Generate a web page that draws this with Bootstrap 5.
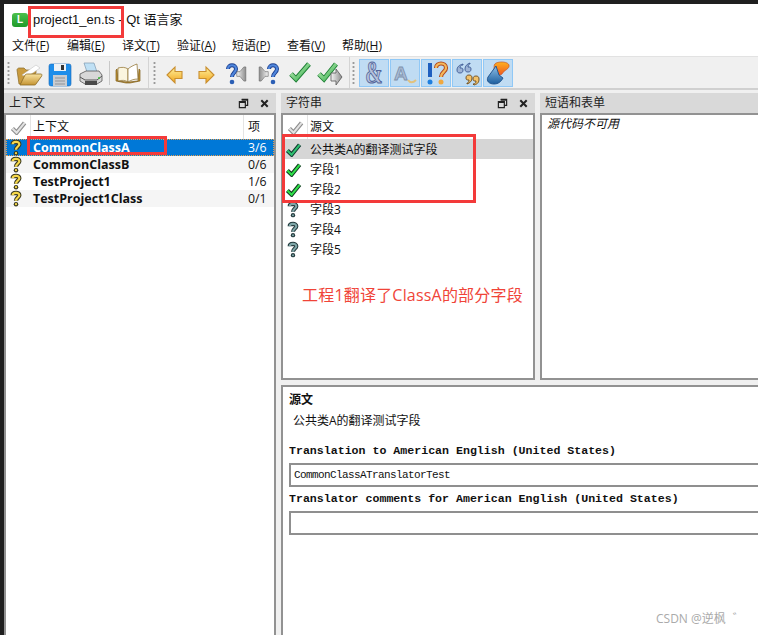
<!DOCTYPE html>
<html lang="zh">
<head>
<meta charset="utf-8">
<title>Qt 语言家</title>
<link rel="stylesheet" href="https://cdn.jsdelivr.net/npm/bootstrap@5.3.0/dist/css/bootstrap.min.css">
<style>
html,body{height:635px;overflow:hidden;background:#1f1f1f;}
body{font-family:"Open Sans","Noto Sans CJK SC",sans-serif;font-size:12px;color:#111;position:relative;}
.shell{width:754px;height:640px;margin:4px 0 0 4px;background:#f0f0f0;display:flex;flex-direction:column;}
.titlebar{height:31px;background:#fff;padding-left:8px;flex:none;}
.appicon{width:16px;height:14px;background:linear-gradient(#4cc04c,#1f9a2a);border-radius:3px;color:#fff;font:bold 10px/14px "Liberation Sans",sans-serif;text-align:center;margin-right:5px;}
.apptitle{font-family:"Liberation Sans","Noto Sans CJK SC",sans-serif;font-size:13px;line-height:20px;color:#111;}
.menubar{height:21px;background:#fff;padding-left:8px;flex:none;}
.menuitem{width:55px;font-size:12px;line-height:20px;white-space:nowrap;color:#111;}
.toolbar{height:34px;flex:none;background:#f0f0f0;border-top:1px solid #e2e2e2;border-bottom:2px solid #d0d0d0;}
.tgroup{height:100%;border-right:1px solid #d4d4d4;}
.grip{width:3px;height:24px;background-image:radial-gradient(circle,#9a9a9a 1px,transparent 1.2px);background-size:3px 4px;}
.g1{margin-left:3px;margin-right:4px;}
.g2{margin-left:3px;margin-right:5px;}
.g3{margin-left:1px;margin-right:4px;}
.tbtn{width:30px;height:28px;margin-right:1px;flex:none;}
.tbtn svg{width:28px;height:28px;overflow:visible;}
.tsep{width:1px;height:24px;background:#c8c8c8;margin:0 3px 0 2px;}
.tactive{background:#c0dcf3;border:1px solid #90c8f6;margin-right:1px;}
.tactive svg{width:26px;height:26px;}
.docks{flex:1;min-height:0;padding-top:3px;gap:5px;}
.leftcol{width:272px;flex:none;}
.rightcol{flex:1;min-width:0;gap:5px;}
.toprow{height:287px;flex:none;gap:5px;}
.strcol{width:254px;flex:none;}
.phrasecol{flex:1;min-width:0;}
.docktitle{height:20px;flex:none;background:#d9d9d9;padding:0 1px 0 5px;font-size:12px;line-height:20px;color:#222;}
.dockbtn{width:21px;height:20px;}
.pane{flex:1;min-height:0;background:#fff;border:2px solid #929292;}
.phrasecol .pane{border-right:0;}
.phead{height:24px;flex:none;font-size:12px;line-height:24px;}
.phead>div{border-right:1px solid #e4e4e4;height:24px;}
.cicon{width:25px;flex:none;}
.cname{flex:1;min-width:0;padding-left:2px;white-space:nowrap;}
.ccount{width:30px;flex:none;padding-left:4px;}
.lrow{height:17px;line-height:17px;font-size:12.3px;}
.lrow .cname{font-weight:700;font-size:12.5px;}
.lrow.alt{background:#f5f5f5;}
.lrow.sel{background:#0078d7;color:#fff;outline:1px dotted #e8a050;outline-offset:-1px;}
.srow{height:20px;line-height:20px;font-size:12px;}
.srow.sel{background:#d6d6d6;}
.srow .stxt{padding-left:2px;margin-top:2px;}
.srow svg,.lrow svg{display:block;margin-left:2px;}
.phrasemsg{font-style:italic;font-size:12px;line-height:14px;padding:2px 5px;}
.srcpane{height:252px;flex:none;background:#fff;border:2px solid #929292;border-right:0;padding:5px 0 0 6px;}
.srchead{font-weight:700;font-size:12px;line-height:16px;}
.srcline{font-size:12px;line-height:16px;margin:5px 0 0 4px;}
.monolabel{font-family:"Liberation Mono",monospace;font-weight:700;font-size:11.6px;line-height:14px;white-space:nowrap;}
.mb1st{margin-top:15px;}
.fieldbox{height:24px;border:2px solid #8f8f8f;border-right:0;background:#fff;font-family:"Liberation Mono",monospace;font-size:11px;letter-spacing:-.6px;line-height:20px;padding-left:3px;margin-top:5px;margin-bottom:5px;}
.redbox{position:absolute;border:3px solid #f33a3a;pointer-events:none;}
.r1{left:28px;top:6px;width:96px;height:32px;}
.r2{left:27px;top:136px;width:140px;height:19px;}
.r3{left:282px;top:134px;width:194px;height:69px;}
.rednote{position:absolute;left:302px;top:284px;color:#f04438;font-size:16px;letter-spacing:.2px;line-height:22px;white-space:nowrap;}
.wm{position:absolute;left:656px;top:611px;color:#aaa;font-size:12px;line-height:16px;white-space:nowrap;}
.wmspeck{margin-left:7px;}
</style>
</head>
<body>
<svg width="0" height="0" class="position-absolute">
<defs>
<linearGradient id="gy" x1="0" y1="0" x2="0" y2="1"><stop offset="0" stop-color="#fff3a0"/><stop offset="1" stop-color="#f2a51c"/></linearGradient>
<linearGradient id="gg" x1="0" y1="0" x2="1" y2="1"><stop offset="0" stop-color="#cdeec0"/><stop offset="1" stop-color="#2fb04a"/></linearGradient>
<linearGradient id="gs" x1="0" y1="0" x2="1" y2="0"><stop offset="0" stop-color="#f4f4f4"/><stop offset="1" stop-color="#8d8d8d"/></linearGradient>
<linearGradient id="gf" x1="0" y1="0" x2="0" y2="1"><stop offset="0" stop-color="#f9e3a0"/><stop offset="1" stop-color="#c59433"/></linearGradient>
<linearGradient id="gfl" x1="0" y1="0" x2="0" y2="1"><stop offset="0" stop-color="#ffb020"/><stop offset="1" stop-color="#ee5a20"/></linearGradient>
<linearGradient id="gbl" x1="0" y1="0" x2="0" y2="1"><stop offset="0" stop-color="#8fc0e8"/><stop offset="1" stop-color="#1d5f9f"/></linearGradient>
<symbol id="qy" viewBox="0 0 16 18"><path d="M4.5 5.5C4.5 2.5 11.5 2 11.5 5.500c0 2.500-3.500 2.500-3.500 6" fill="none" stroke="#3b3a20" stroke-width="4.600"/><circle cx="8" cy="15" r="2.400" fill="#3b3a20"/><path d="M4.500 5.500C4.500 2.500 11.500 2 11.500 5.500c0 2.500-3.500 2.500-3.500 6" fill="none" stroke="#f6d84a" stroke-width="2.400"/><circle cx="8" cy="15" r="1.200" fill="#f6d84a"/></symbol>
<symbol id="qg" viewBox="0 0 16 18"><path d="M4.500 5.500C4.500 2.500 11.500 2 11.500 5.500c0 2.500-3.500 2.500-3.500 6" fill="none" stroke="#23393c" stroke-width="4.400"/><circle cx="8" cy="15" r="2.300" fill="#23393c"/><path d="M4.500 5.500C4.500 2.500 11.500 2 11.500 5.500c0 2.500-3.500 2.500-3.500 6" fill="none" stroke="#7fa6a8" stroke-width="2.200"/><circle cx="8" cy="15" r="1.100" fill="#7fa6a8"/></symbol>
<symbol id="ck" viewBox="0 0 18 16"><path d="M2.500 9l4.500 4.500L15.500 3" fill="none" stroke="#123a20" stroke-width="4.400"/><path d="M2.500 9l4.500 4.500L15.500 3" fill="none" stroke="#2fe04a" stroke-width="2.200"/></symbol>
<symbol id="cks" viewBox="0 0 18 16"><path d="M2.500 9l4.500 4.500L15.500 3" fill="none" stroke="#123a30" stroke-width="4.400"/><path d="M2.500 9l4.500 4.500L15.500 3" fill="none" stroke="#2fc070" stroke-width="2.200"/></symbol>
<symbol id="ckg" viewBox="0 0 18 16"><path d="M2.500 9l4.500 4.500L15.500 3" fill="none" stroke="#8e8e8e" stroke-width="4.600"/><path d="M2.500 9l4.500 4.500L15.500 3" fill="none" stroke="#e2e2e2" stroke-width="2.200"/></symbol>
<symbol id="fl" viewBox="0 0 12 12"><path d="M4 1.500h6.500v6.500H8.500M1.500 4h6.500v6.500H1.500z" fill="none" stroke="#222" stroke-width="1.300"/><path d="M4 2.200h6.500" stroke="#222" stroke-width="1.500"/><path d="M1.500 4.700h6.500" stroke="#222" stroke-width="1.500"/></symbol>
<symbol id="cl" viewBox="0 0 12 12"><path d="M2.500 2.500l7 7M9.500 2.500l-7 7" stroke="#222" stroke-width="2.200"/></symbol>
<symbol id="sp" viewBox="0 0 14 22"><path d="M1 8h4l5-6h2.500v18H10l-5-6H1z" fill="url(#gs)" stroke="#666" stroke-width=".8"/></symbol>
</defs>
</svg>

<div class="shell">
  <div class="titlebar d-flex align-items-center">
    <div class="appicon">L</div>
    <div class="apptitle">project1_en.ts - Qt 语言家</div>
  </div>
  <div class="menubar d-flex align-items-center">
    <div class="menuitem">文件(<u>F</u>)</div>
    <div class="menuitem">编辑(<u>E</u>)</div>
    <div class="menuitem">译文(<u>T</u>)</div>
    <div class="menuitem">验证(<u>A</u>)</div>
    <div class="menuitem">短语(<u>P</u>)</div>
    <div class="menuitem">查看(<u>V</u>)</div>
    <div class="menuitem">帮助(<u>H</u>)</div>
  </div>
  <div class="toolbar d-flex">
    <div class="tgroup d-flex align-items-center pe-1">
      <div class="grip g1"></div>
      <div class="tbtn d-flex align-items-center justify-content-center"><svg viewBox="0 0 28 28"><g transform="translate(0 2)"><path d="M4 23L2 9c0-1 1-2 2-2h5l2 2h10v3L5 23z" fill="#c99b3f" stroke="#8a6a25" stroke-width=".7"/><path d="M7 14L21 4l4 3-13 9z" fill="#fff" stroke="#bbb" stroke-width=".5"/><path d="M5 24L10 14c1-1 2-1 3-1h13c1 0 1 1 .7 2L21 23c-.5 1-1 1-2 1z" fill="url(#gf)" stroke="#8a6a25" stroke-width=".8"/></g></svg></div>
      <div class="tbtn d-flex align-items-center justify-content-center"><svg viewBox="0 0 28 28"><g transform="translate(0 2)"><rect x="3" y="3" width="22" height="22" rx="2" fill="#1f8eea" stroke="#1567b5" stroke-width=".6"/><rect x="8" y="3" width="12" height="7" fill="#eef2f6"/><rect x="15" y="4" width="3" height="5" fill="#333"/><rect x="7" y="14" width="14" height="11" fill="#c9ccd0"/><path d="M9 17h10M9 20h10M9 23h10" stroke="#8f9399" stroke-width="1"/></g></svg></div>
      <div class="tbtn d-flex align-items-center justify-content-center"><svg viewBox="0 0 28 28"><g transform="translate(0 1)"><path d="M7 3h10l3 9H10z" fill="#bfe0f5" stroke="#7e9ab0" stroke-width=".7"/><path d="M3 14l6-3h13l3 4v6l-5 3H8l-5-3z" fill="#d8d8d8" stroke="#555" stroke-width=".8"/><path d="M3 17l5 3h12l5-4" fill="none" stroke="#555" stroke-width="1"/><path d="M8 21h12v4H8z" fill="#4a4a4a"/><circle cx="22" cy="18" r="1" fill="#3ec03e"/></g></svg></div>
      <div class="tsep"></div>
      <div class="tbtn d-flex align-items-center justify-content-center"><svg viewBox="0 0 28 28"><g transform="translate(0 2)"><path d="M2 20V9l1-1 1 12 9 1 1 1 1-1 9-1 1-12 1 1v11l-10 2h-4z" fill="#c29431" stroke="#805f1c" stroke-width=".7"/><path d="M4 7c4-1 7-1 10 1v13c-3-2-6-2-10-1z" fill="#fbf5df" stroke="#8a6a25" stroke-width=".7"/><path d="M14 8c2-2 6-4 9-5l1 15c-4 0-7 1-10 3z" fill="#fff" stroke="#8a6a25" stroke-width=".7"/></g></svg></div>
    </div>
    <div class="tgroup d-flex align-items-center" style="padding-right:2px;margin-left:1px">
      <div class="grip g2"></div>
      <div class="tbtn d-flex align-items-center justify-content-center"><svg viewBox="0 0 28 28"><path d="M5 16l8-8v4.500h7v7h-7V24z" fill="url(#gy)" stroke="#c98f30" stroke-width="1.100"/></svg></div>
      <div class="tbtn d-flex align-items-center justify-content-center"><svg viewBox="0 0 28 28"><path d="M21 16l-8-8v4.500H6v7h7V24z" fill="url(#gy)" stroke="#c98f30" stroke-width="1.100"/></svg></div>
      <div class="tbtn d-flex align-items-center justify-content-center"><svg viewBox="0 0 28 28"><path d="M4 10c0-5 8-5 8 0 0 3.500-4 4-4 8" fill="none" stroke="#1c3f8f" stroke-width="4"/><path d="M4 10c0-5 8-5 8 0 0 3.500-4 4-4 8" fill="none" stroke="#4f86dc" stroke-width="2.200"/><circle cx="8" cy="23" r="2.300" fill="#2c5fb5"/><use href="#sp" x="12" y="6" width="11" height="18"/></svg></div>
      <div class="tbtn d-flex align-items-center justify-content-center"><svg viewBox="0 0 28 28"><g transform="matrix(-1 0 0 1 14 0)"><use href="#sp" x="0" y="6" width="11" height="18"/></g><path d="M14 10c0-5 8-5 8 0 0 3.500-4 4-4 8" fill="none" stroke="#1c3f8f" stroke-width="4"/><path d="M14 10c0-5 8-5 8 0 0 3.500-4 4-4 8" fill="none" stroke="#4f86dc" stroke-width="2.200"/><circle cx="18" cy="23" r="2.300" fill="#2c5fb5"/></svg></div>
      <div class="tbtn d-flex align-items-center justify-content-center"><svg viewBox="0 0 28 28"><path d="M5 15l5 5L23 5" fill="none" stroke="#1e7f35" stroke-width="5"/><path d="M5 15l5 5L23 5" fill="none" stroke="url(#gg)" stroke-width="3.200"/></svg></div>
      <div class="tbtn d-flex align-items-center justify-content-center"><svg viewBox="0 0 28 28"><path d="M2 15l5 5L19 5" fill="none" stroke="#1e7f35" stroke-width="5"/><path d="M2 15l5 5L19 5" fill="none" stroke="url(#gg)" stroke-width="3.200"/><path d="M25 18l-6-8v4h-5v8h5v4z" fill="url(#gs)" stroke="#555" stroke-width=".8"/></svg></div>
    </div>
    <div class="d-flex align-items-center" style="margin-left:1px">
      <div class="grip g3"></div>
      <div class="tbtn tactive d-flex align-items-center justify-content-center"><svg viewBox="0 0 26 26"><text transform="translate(13 23) scale(.8 1.2)" text-anchor="middle" font-family="Liberation Serif" font-weight="700" font-size="26" fill="#b9c3dc" stroke="#54669a" stroke-width=".9">&amp;</text></svg></div>
      <div class="tbtn tactive d-flex align-items-center justify-content-center"><svg viewBox="0 0 26 26"><text x="2" y="20" font-family="Liberation Sans" font-weight="700" font-size="19" fill="#a9bcd5" stroke="#7d90ac" stroke-width=".8">A</text><path d="M16 20c2 3 5 3 8 0" fill="none" stroke="#e2c27e" stroke-width="2"/></svg></div>
      <div class="tbtn tactive d-flex align-items-center justify-content-center"><svg viewBox="0 0 26 26"><path d="M7 3v14" stroke="#1f5fbf" stroke-width="4"/><circle cx="7" cy="22" r="2.500" fill="#1f7fdf"/><path d="M13 8c0-6 10-6 10 0 0 4-5 4-5 9" fill="none" stroke="#b04a20" stroke-width="4.200"/><path d="M13 8c0-6 10-6 10 0 0 4-5 4-5 9" fill="none" stroke="#f5b85a" stroke-width="2.200"/><circle cx="18" cy="22" r="2.500" fill="#f0a840"/></svg></div>
      <div class="tbtn tactive d-flex align-items-center justify-content-center"><svg viewBox="0 0 26 26"><path d="M9 4C5 5 3 7 3 10c0 2 1 3 3 3s3-1 3-3-1-2-3-2c0-2 1-3 3-3zM16 3c-3 1-5 3-5 6 0 2 1 3 3 3s3-1 3-3-1-2-3-2c0-2 1-3 2-3z" fill="#9db4d6" stroke="#3d5a94" stroke-width=".9"/><path d="M13 24c3-1 5-3 5-6 0-2-1-3-3-3s-3 1-3 3 1 2 3 2c0 2-1 3-2 3zM20 25c4-1 5-3 5-6 0-2-1-3-3-3s-3 1-3 3 1 2 3 2c0 2-1 3-3 3z" fill="#f2c26a" stroke="#6b4a1a" stroke-width=".9"/></svg></div>
      <div class="tbtn tactive d-flex align-items-center justify-content-center"><svg viewBox="0 0 26 26"><path d="M11 3c5-2 12-1 13 2 1 4-5 5-7 9-2 2-5 1-5-2 0-2-1-3-3-3 0-3 0-5 2-6z" fill="url(#gfl)" stroke="#c0481a" stroke-width=".6"/><path d="M11 6L3 17c-2 4 1 7 6 7 4 0 7-2 9-6l-4-3-1-3z" fill="url(#gbl)" stroke="#1c4f8a" stroke-width=".9"/></svg></div>
    </div>
  </div>

  <div class="docks d-flex">
    <div class="leftcol d-flex flex-column">
      <div class="docktitle d-flex align-items-center justify-content-between"><span>上下文</span><span class="d-flex"><span class="dockbtn d-flex align-items-center justify-content-center"><svg width="11" height="11"><use href="#fl"/></svg></span><span class="dockbtn d-flex align-items-center justify-content-center"><svg width="11" height="11"><use href="#cl"/></svg></span></span></div>
      <div class="pane d-flex flex-column">
        <div class="phead d-flex">
          <div class="cicon d-flex align-items-center justify-content-center"><svg width="17" height="15"><use href="#ckg"/></svg></div>
          <div class="cname">上下文</div>
          <div class="ccount border-0">项</div>
        </div>
        <div class="lrow sel d-flex align-items-center"><div class="cicon"><svg width="16" height="17"><use href="#qy"/></svg></div><div class="cname">CommonClassA</div><div class="ccount">3/6</div></div>
        <div class="lrow alt d-flex align-items-center"><div class="cicon"><svg width="16" height="17"><use href="#qy"/></svg></div><div class="cname">CommonClassB</div><div class="ccount">0/6</div></div>
        <div class="lrow d-flex align-items-center"><div class="cicon"><svg width="16" height="17"><use href="#qy"/></svg></div><div class="cname">TestProject1</div><div class="ccount">1/6</div></div>
        <div class="lrow alt d-flex align-items-center"><div class="cicon"><svg width="16" height="17"><use href="#qy"/></svg></div><div class="cname">TestProject1Class</div><div class="ccount">0/1</div></div>
      </div>
    </div>
    <div class="rightcol d-flex flex-column">
      <div class="toprow d-flex">
        <div class="strcol d-flex flex-column">
          <div class="docktitle d-flex align-items-center justify-content-between"><span>字符串</span><span class="d-flex"><span class="dockbtn d-flex align-items-center justify-content-center"><svg width="11" height="11"><use href="#fl"/></svg></span><span class="dockbtn d-flex align-items-center justify-content-center"><svg width="11" height="11"><use href="#cl"/></svg></span></span></div>
          <div class="pane d-flex flex-column">
            <div class="phead d-flex">
              <div class="cicon d-flex align-items-center justify-content-center"><svg width="17" height="15"><use href="#ckg"/></svg></div>
              <div class="cname border-0">源文</div>
            </div>
            <div class="srow sel d-flex align-items-center"><div class="cicon"><svg width="17" height="15"><use href="#cks"/></svg></div><div class="stxt">公共类A的翻译测试字段</div></div>
            <div class="srow d-flex align-items-center"><div class="cicon"><svg width="17" height="15"><use href="#ck"/></svg></div><div class="stxt">字段1</div></div>
            <div class="srow d-flex align-items-center"><div class="cicon"><svg width="17" height="15"><use href="#ck"/></svg></div><div class="stxt">字段2</div></div>
            <div class="srow d-flex align-items-center"><div class="cicon"><svg width="16" height="17"><use href="#qg"/></svg></div><div class="stxt">字段3</div></div>
            <div class="srow d-flex align-items-center"><div class="cicon"><svg width="16" height="17"><use href="#qg"/></svg></div><div class="stxt">字段4</div></div>
            <div class="srow d-flex align-items-center"><div class="cicon"><svg width="16" height="17"><use href="#qg"/></svg></div><div class="stxt">字段5</div></div>
          </div>
        </div>
        <div class="phrasecol d-flex flex-column">
          <div class="docktitle">短语和表单</div>
          <div class="pane"><div class="phrasemsg">源代码不可用</div></div>
        </div>
      </div>
      <div class="srcpane">
        <div class="srchead">源文</div>
        <div class="srcline">公共类A的翻译测试字段</div>
        <div class="monolabel mb1st">Translation to American English (United States)</div>
        <div class="fieldbox">CommonClassATranslatorTest</div>
        <div class="monolabel">Translator comments for American English (United States)</div>
        <div class="fieldbox"></div>
      </div>
    </div>
  </div>
</div>

<div class="redbox r1"></div>
<div class="redbox r2"></div>
<div class="redbox r3"></div>
<div class="rednote">工程1翻译了ClassA的部分字段</div>
<div class="wm">CSDN @逆枫<span class="wmspeck">゛</span></div>
<script src="https://cdn.jsdelivr.net/npm/bootstrap@5.3.0/dist/js/bootstrap.bundle.min.js"></script>
</body>
</html>
